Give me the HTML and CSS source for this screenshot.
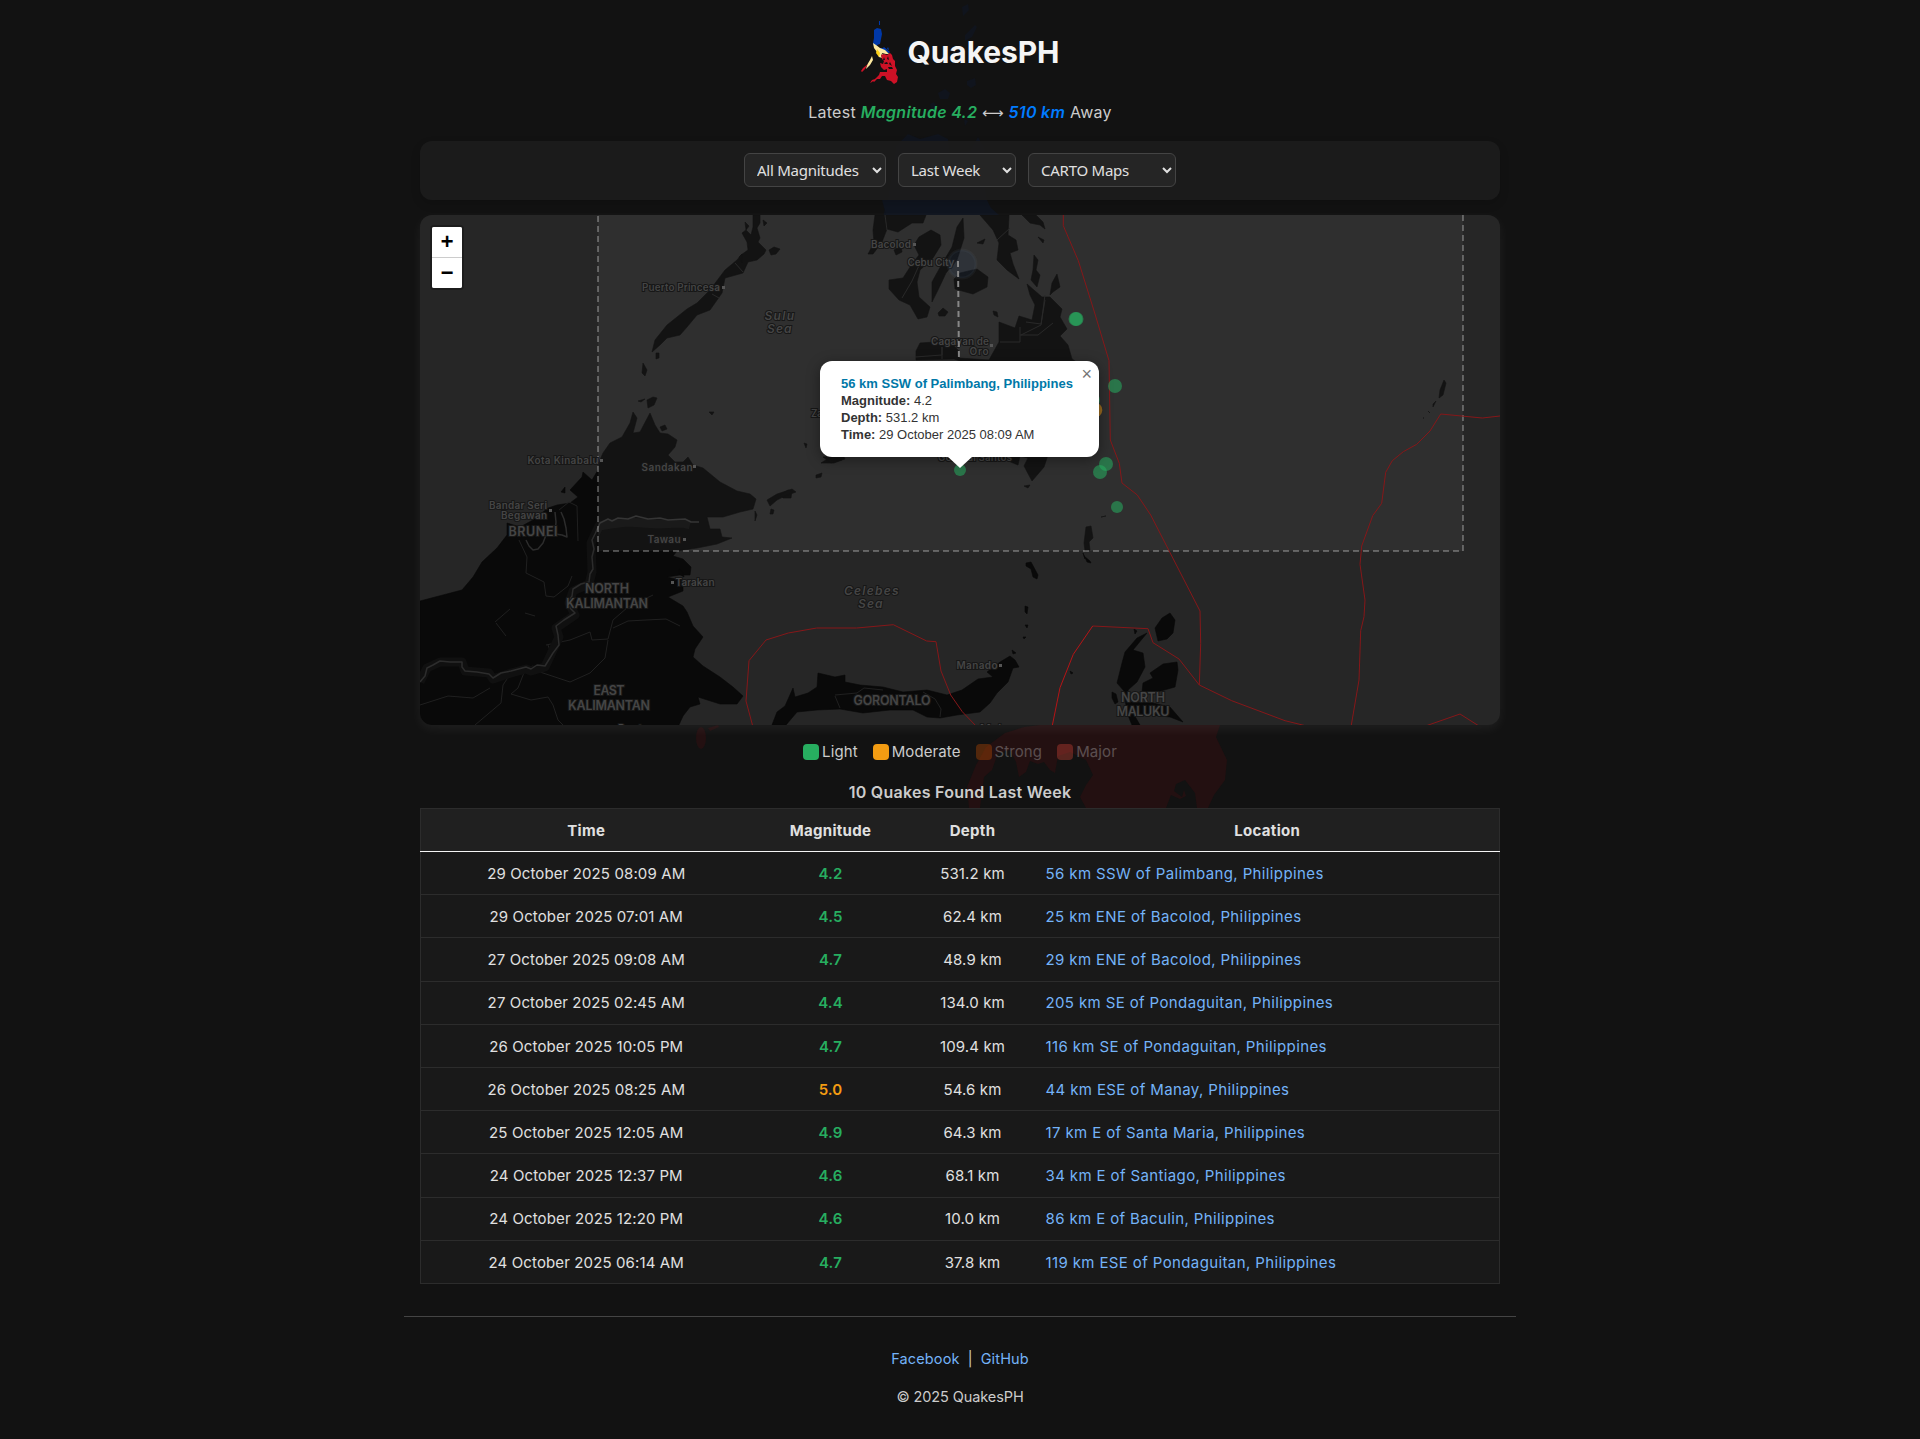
FILE: index.html
```html
<!DOCTYPE html>
<html lang="en">
<head>
<meta charset="utf-8">
<title>QuakesPH</title>
<link rel="stylesheet" href="styles.css">
</head>
<body>
<svg class="backdrop" viewBox="0 0 1920 1439" aria-hidden="true">
  <g fill="#10141d">
    <path d="M962 7l6-3 1 6-6 6zM965 35l10-10 2 2-5 10-7 4zM967 81l8-3 1 7-5 3-4-3zM938 93l7-4 5 4-2 6-8 0zM930 104l4-2 4 8-6 4zM964 119l4 2-3 5zM896 146l12-12 12 5 18-5 10 5 2 14 20-2 8-14 7 12-2 25 4 25-4 15 18 14H880l8-30z"/>
    <path fill="#10151f" d="M882 200h105l4 8 8 7H886z"/>
  </g>
  <g fill="#231011">
    <path d="M986 747L1005 733 1024 727 1040 725H1220L1216 737 1227 760 1225 780 1214 795 1208 808H1197L1195 793 1185 780 1176 784 1174 791 1182 797 1184 790 1186 796 1180 799 1171 795 1166 808H1086L1080 797 1086 785 1093 775 1086 760 1070 752 1058 756 1055 773 1050 770 1044 762 1038 764 1030 761 1026 772 1019 777 1016 762 1010 750 998 753 992 770 984 777 980 808H969L967 787 976 765z"/>
    <ellipse cx="701" cy="738" rx="5" ry="11"/>
    <path d="M708 728l10-3 1 2-9 4z"/>
  </g>
</svg>

<div class="page">
  <header class="header">
    <div class="brand">
      <svg class="logo" viewBox="0 0 38 64">
        <path fill="#0038a8" d="M13 10l3-2 4 1 1 5-1 5-1 5-3 1 1 3 5 0 1-1 6 5-1 1-5-1-5-3-5-3-1-3 1-5zM18 1h1v4h-1zM27 27l1 3-2-1z"/>
        <path fill="#fce9a0" d="M12 23l3 2 4 3 5 2 4 4-3 0-4-1-1 2 1 3-3-1-2-5-3-4zM11 36l1 4-3 5-4 4 1-4 3-5zM20 32l2 3-1 1z"/>
        <path fill="#fcd116" d="M16 29l3 4-1 4-3-4z"/>
        <path fill="#ce1126" d="M20 35l3-1 3 1 3-2 2 2 1 4 2 2 0 5 2 4-1 4 2 3-1 5-3 2-3-3-4-1-2-4-3 0-2 3-3 0-3 3-1-1 3-3 3-3 1-3 5 0 2 0 0-3-3 1-3-3-1-4 3 1 1-3-2-2zM7 44l-3 5-3 3-1-1 2-3zM14 59l-3 3-2 1 2-3z"/>
        <path fill="#121212" d="M23 37l1 3-2 0zM27 36l1 4-2-1zM23 43l3-1 1 2-3 0zM29 42l2 4-3-2zM27 47l4 0 1 2-4 0z"/>
      </svg>
      <h1 class="title">QuakesPH</h1>
    </div>
    <p class="latest">Latest <em class="mag">Magnitude 4.2</em> <span class="arrow">⟷</span> <em class="dist">510 km</em> Away</p>
  </header>

  <section class="controls">
    <select class="s1"><option>All Magnitudes</option></select>
    <select class="s2"><option>Last Week</option></select>
    <select class="s3"><option>CARTO Maps</option></select>
  </section>

  <section class="map">
    <svg class="tiles" viewBox="420 215 1080 510">
      <g class="land">
        <path d="M753 215l7 0 0 8-3 5 3 10-2 4 8 8-2 4-7 6-9 2-5 11-18 5-3 15-12 17-13 5-10 12-7 8-13 3-7 7-8 7 3-12 12-15 20-16 10-6 13-13 15-20 12-10 4-5 7-5-1-8-5-9 4-3 5 5 2-8z"/>
        <path d="M769 250l5-3 6 2-4 5-5 1zM656 353l3 0 0 5-3 1zM643 363l4 7-2 6-3-3zM647 400l6-3 4 1-3 7-6 3zM638 401l7-2-4 3zM709 412l5 0-2 3zM660 427l5-2 2 4-5 2zM745 222l4 4-3 4zM763 220l4 3-3 3zM742 263l-3-6 3-3z"/>
        <path d="M420 601l42-11 11-13 9-15 15-14 10-13 0-12 13 4 13-7 15-12 9-3 13-2 8-6-8-7 12-13 1-5 9 8 6-10 2-10 3-7 7-10 12-6 8-14 3-11 4 6-4 15 7-1 10-19 5 12 5 8 8 1 9 6-2 7-7 8 7 7 8 0 5-5 5 8 10 3 17 14 17 9 13 3 6 5-3 10-13 3-17 5-16 0 3 12 10 0 2 8 10 1-15 6-20 4-20 3-4 5 10 3 8 8-1 8-10 0-13 2 16 4 0 10-15 6 15 9 4 6 6 14 10 11-8 12-2 8 10 9 17 11 13 10 10 9-6 8-17 0-22-7 2 7-10 3-7 9-5 11-1 7H420z"/>
        <path d="M679 569l4 3 1 5-5-3zM561 492l4-5 0 6zM767 500l10-6 15-5 4 3-11 4-8 4-7 6zM771 509l3 1-1 4-3 0zM755 511l2 4-2 6zM804 443l3 1-1 4zM821 463l8-5 13 2-8 3zM816 475l6-2-1 4-5 1zM780 495l8-5 4 1-1 7-8 0zM823 457l20-2 2 4-14 4z"/>
        <path d="M875 215l-2 15 1 13-6 11 5 0 9-12 5-13 11 3 14-9 11 0 3-8zM894 250l7-4 1 6-6 3z"/>
        <path d="M919 237l12-7 9 5 1 10-8 13-13 12-3 12 2 15 11 10-3 10-9 2-8-14-11-5-10-11 0-9 14-2 9-14 7-9-5-10z"/>
        <path d="M963 218l1 20-7 22-11 13-8 17-6 12 0-20 11-20 9-15 5-20zM960 273l17-4 11 8-1 10-14 7-18-5-1-10zM938 313l5-5 5 4-3 4-6 0zM993 311l4 1 1 5-4-2zM977 243l8-4-2 5z"/>
        <path d="M980 215l13 15 6 13-2 17 10 10 12 9-6-15-3-11 8-3-2-10-8-5 1-20zM1022 215l8 8 10 2 5 4-2-7-7-7zM1034 255l4 5-2 10 4 5-3 12-6-7 2-10zM1052 283l5-9 3 13-7 5-3 3zM1038 237l6 3-1 3z"/>
        <path d="M1027 284l15 13 8 0 12 12-2 8 7 12-7 7 8 9 4 14 9 6v60l-30 20-4 13-3 9-12 14-8-15 4-8-8-2-2 9-17-7-15-9 0-80-32-10-38 1 0-9 4-8 29-2 10 10 0 7 30 2 10-18 0-20 16 6 4-12 13 4 3-15-5-10z"/>
        <path d="M1024 486l6-1-2 3zM1101 517l5-1zM1086 527l5-1 2 12-4 4 1 8-5 1-1-8zM1083 553l2 6-1-3 6 5 1 2-4-1zM1026 563l5-1 7 13-1 4-4-2-2-8-5-3zM1025 606l3 1-1 7-2-2zM1025 625l3 0-1 3zM1023 637l3 0-2 2zM1012 650l4 3-3 1zM1070 671l3 2-2 1z"/>
        <path d="M772 725l5-13 8-6 8-18 2 9 13-4 9-6 1-14 17 4 10-2 0 7 15 3 23 2 20 5 24-2 20 5 15-5 16-11 15-2-6-5 13-10 10-6 5 4 4 7-6 1-5 14-11 11-7 10-10 9-23 3-17 3-13-1-14-7-23 0-27 3-23-4-23 1-20 2-11 13z"/>
        <path d="M1147 633l-14 17 10 3 2 14-8 15-9 8 2 12 23 1 17 4 13 15-13-5-37-4 7 12h-8l-5-12-3-22-7-8 5-20 3-11 12-14zM1170 613l5 7-2 13-6 6-9 2-3-13 7-10zM1177 662l1 8-3 17-18 5-15 0 1-9 10-5-3-5 13-9zM1134 629l3 2-2 3zM1112 692l4 2 2 8-3 2-3-6z"/>
        <path d="M1440 390l4-10 2 3-3 12-4 3zM1433 404l3-3-3 6zM1428 411l2 2zM1423 418l1 0z"/>
      </g>
      <g class="border-minor">
        <path d="M885 215l2 15M902 298l10-17 9-20M997 240l13-12M1026 322l15 2 4-24M1020 335l18 0 15-12M1000 342h20v-15M1045 295l-4 30-20 10M915 357l27-2v-8M942 347v12M735 263l8 9M712 294l7 4"/>
        <path d="M519 540l8 17-1 16 18 9 2 14 8 1 14-11 4-10M578 541l-1-35-8-4-10 8M546 645l24-5 20-8 2 8 16-1 5-19 15-13 25-12M613 628l15-7 18-1 20-1 14 7M608 640l-3 18-15 15-20 9-30-10-7-6-13 5M513 670l-10 15-2 18-26 22M420 705l28-9 25 2 17-10M525 670l-7 18-7 6 20 6 17-3 5 8 5 15 15 15M495 622l15-13M496 623l10 13M525 613l10 3M548 645l4 11-5 7"/>
        <path d="M835 695l22-2 7-5 19 2M835 696l5 12M923 692l12 7 6 10-1 8"/>
      </g>
      <g class="border-major">
        <path class="glow" d="M420 682l7-14 13-6 22 0 3 9 24 2 4 6 18-6 15-4 5 2 14-4 14-30-3-9 19-13-6-12 4-12 16-7 3-12-1-29 8-17 12-2 16-2 30 2 25-1 8 2"/>
        <path d="M420 682l5-6 2-8 6-3 7-4 10 1 12 0 0 5 3 4 12 1 12 2 4 4 8-5 10-2 15-4 5 2 6-4 8 1 8-13 6-8-1-10-2-9 8-6 11-7-5-5-1-7 3-5 1-7 8-5 8-2 1-8 3-5-1-12 2-8-2-9 3-6 5-11 8-4 4 2 6-3 10 1 8-3 12 3 12-1 8 2 17-1 6 3 8 0"/>
        <path d="M526 540l3 6 4 4 5-1 5-6 3-8M555 512l1 10-1 12 7 1 5 2-1-9-2-9-3-7"/>
      </g>
      <rect class="zone" x="598" y="150" width="865" height="401"/>
      <g class="labels" text-anchor="middle">
        <g font-size="10"><text x="681" y="291" textLength="78">Puerto Princesa</text><text x="891" y="248" textLength="40">Bacolod</text><text x="931" y="266" textLength="47">Cebu City</text><text x="960" y="345" textLength="58">Cagayan de</text><text x="979" y="355" textLength="19">Oro</text><text x="563" y="464" textLength="71">Kota Kinabalu</text><text x="667" y="471" textLength="51">Sandakan</text><text x="518" y="509" textLength="58">Bandar Seri</text><text x="524" y="519" textLength="46">Begawan</text><text x="664" y="543" textLength="33">Tawau</text><text x="695" y="586" textLength="39">Tarakan</text><text x="977" y="669" textLength="41">Manado</text><text x="838" y="417" textLength="54">Zamboanga</text><text x="975" y="461" textLength="74">General Santos</text><text x="640" y="732" textLength="44">Bontang</text></g>
        <g font-size="12.5"><text x="533" y="536" textLength="49">BRUNEI</text><text x="607" y="593" textLength="44">NORTH</text><text x="607" y="608" textLength="82">KALIMANTAN</text><text x="609" y="695" textLength="31">EAST</text><text x="609" y="710" textLength="82">KALIMANTAN</text><text x="892" y="705" textLength="77">GORONTALO</text><text x="1143" y="702" textLength="44">NORTH</text><text x="1143" y="716" textLength="53">MALUKU</text></g>
        <g class="sea" font-size="12"><text x="780" y="320" textLength="31">Sulu</text><text x="780" y="333" textLength="26">Sea</text><text x="872" y="595" textLength="56">Celebes</text><text x="871" y="608" textLength="26">Sea</text><text x="1008" y="733" textLength="58">Moluccas</text></g>
      </g>
      <path class="towns" d="M722 286h3v3h-3zM913 243h3v3h-3zM990 344h3v3h-3zM600 459h3v3h-3zM693 465h3v3h-3zM549 509h3v3h-3zM683 538h3v3h-3zM671 581h3v3h-3zM999 664h3v3h-3z"/>
      <g class="faults">
        <path d="M1063.3 215V225.7L1078.3 260.7 1095 314 1109 360.7 1110.3 440 1119.3 463.3 1122 483 1137.3 495 1150.7 515 1200 611 1200.7 643.3 1199.3 685"/>
        <path d="M1092.7 626L1148 628.7 1153 642.7 1179 659 1199.3 685 1231.7 700.7 1285 720.7 1310.7 727"/>
        <path class="strong" d="M1052 727L1060 687.7 1073.3 654.3 1092.7 626"/>
        <path d="M1500 416L1482.3 418 1440.7 414 1430 431 1416.7 444.3 1403.3 451.7 1392.3 460.7 1385.7 472.3 1381.7 503.3 1372.7 515.7 1361.7 546 1360 564.3 1365 600 1364 616.7 1360.7 630.7 1359 680 1351 727M1427 725.5L1460 714 1479 726"/>
        <path d="M753 727L746 701 749 660.7 766 640 788.3 633 816.7 628H856.7L893.3 624.7 926.7 641 936 641.7 941 671 950.7 695 962.3 711.7 977 727"/>
      </g>
      <circle class="here" cx="962" cy="264" r="14"/>
      <path class="ray" d="M958 261L960 468"/>
      <g class="quakes">
        <circle cx="1075.5" cy="319" r="7"/><circle cx="1076.5" cy="319" r="7"/><circle cx="1115" cy="386" r="7"/><circle cx="1093" cy="400" r="7"/><circle class="moderate" cx="1095" cy="410" r="7.3"/>
        <circle cx="1106" cy="464" r="7"/><circle cx="1100" cy="472" r="7"/><circle cx="1117" cy="507" r="6"/><circle cx="960" cy="470" r="6"/>
      </g>
    </svg>
    <div class="zoom"><button>+</button><button>−</button></div>
    <div class="popup">
      <span class="close">×</span>
      <b class="place">56 km SSW of Palimbang, Philippines</b><br>
      <b>Magnitude:</b> 4.2<br>
      <b>Depth:</b> 531.2 km<br>
      <b>Time:</b> 29 October 2025 08:09 AM
    </div>
  </section>

  <div class="legend">
    <span class="key light">Light</span><span class="key moderate">Moderate</span><span class="key strong off">Strong</span><span class="key major off">Major</span>
  </div>
  <h2 class="count">10 Quakes Found Last Week</h2>

  <table class="quake-table">
    <colgroup><col class="c1"><col class="c2"><col class="c3"><col class="c4"></colgroup>
    <thead><tr><th>Time</th><th>Magnitude</th><th>Depth</th><th>Location</th></tr></thead>
    <tbody>
      <tr><td>29 October 2025 08:09 AM</td><td>4.2</td><td>531.2 km</td><td><a>56 km SSW of Palimbang, Philippines</a></td></tr>
      <tr><td>29 October 2025 07:01 AM</td><td>4.5</td><td>62.4 km</td><td><a>25 km ENE of Bacolod, Philippines</a></td></tr>
      <tr><td>27 October 2025 09:08 AM</td><td>4.7</td><td>48.9 km</td><td><a>29 km ENE of Bacolod, Philippines</a></td></tr>
      <tr><td>27 October 2025 02:45 AM</td><td>4.4</td><td>134.0 km</td><td><a>205 km SE of Pondaguitan, Philippines</a></td></tr>
      <tr><td>26 October 2025 10:05 PM</td><td>4.7</td><td>109.4 km</td><td><a>116 km SE of Pondaguitan, Philippines</a></td></tr>
      <tr><td>26 October 2025 08:25 AM</td><td class="mod">5.0</td><td>54.6 km</td><td><a>44 km ESE of Manay, Philippines</a></td></tr>
      <tr><td>25 October 2025 12:05 AM</td><td>4.9</td><td>64.3 km</td><td><a>17 km E of Santa Maria, Philippines</a></td></tr>
      <tr><td>24 October 2025 12:37 PM</td><td>4.6</td><td>68.1 km</td><td><a>34 km E of Santiago, Philippines</a></td></tr>
      <tr><td>24 October 2025 12:20 PM</td><td>4.6</td><td>10.0 km</td><td><a>86 km E of Baculin, Philippines</a></td></tr>
      <tr><td>24 October 2025 06:14 AM</td><td>4.7</td><td>37.8 km</td><td><a>119 km ESE of Pondaguitan, Philippines</a></td></tr>
    </tbody>
  </table>
</div>

<footer class="footer">
  <p><a>Facebook</a><span class="sep">|</span><a>GitHub</a></p>
  <p class="copy">© 2025 QuakesPH</p>
</footer>
</body>
</html>
```
FILE: styles.css
```css
* { box-sizing: border-box; }
html { background: #121212; }
body { margin: 0; color: #e0e0e0; font: 15px/1.5 Inter, "Noto Sans", sans-serif; height: 1439px; overflow: hidden; }
.backdrop { position: absolute; inset: 0; width: 1920px; height: 1439px; z-index: -1; }
.page { width: 1080px; margin: 0 auto; }
.header { height: 141px; padding-top: 20px; }
.brand { display: flex; justify-content: center; align-items: center; gap: 9px; height: 64px; }
.logo { width: 38px; height: 64px; }
.title { margin: 0; height: 64px; line-height: 64px; color: #f5f5f5; font-size: 30px; font-weight: 700; letter-spacing: -.1px; }
.latest { margin: 15px 0 0; text-align: center; font-size: 16px; line-height: 26px; color: #ccc; white-space: nowrap; letter-spacing: .28px; }
.latest em { font-weight: 600; }
.mag { color: #27ae60; }
.dist { color: #007bff; }
.arrow { font-family: "DejaVu Sans", sans-serif; font-size: 15px; }
.controls { display: flex; justify-content: center; align-items: center; gap: 12px; height: 59px; padding-bottom: 1px; background: rgba(28, 28, 28, .93); border-radius: 12px; box-shadow: 0 4px 10px rgba(0, 0, 0, .15); }
.controls select { height: 34px; padding: 0 4px 1px 8px; color: #e0e0e0; background: #252525; border: 1px solid #444; border-radius: 6px; font: 15px "Noto Sans", sans-serif; letter-spacing: -.25px; }
.s1 { width: 142px; }
.s2 { width: 118px; }
.s3 { width: 148px; }
.map { position: relative; margin-top: 15px; height: 510px; background: #262626; border-radius: 12px; box-shadow: 0 4px 12px rgba(255, 255, 255, .06); }
.tiles { display: block; width: 1080px; height: 510px; border-radius: 12px; overflow: hidden; }
.land { fill: #090909; stroke: #090909; stroke-width: .6; stroke-linejoin: round; }
.border-minor { fill: none; stroke: #202020; stroke-width: 1; }
.border-major { fill: none; stroke: #2c2c2c; stroke-width: 1.5; stroke-linejoin: round; }
.border-major .glow { stroke: #101010; stroke-width: 9; }
.zone { fill: rgba(255, 255, 255, .042); stroke: rgba(255, 255, 255, .27); stroke-width: 2; stroke-dasharray: 6 4; }
.labels { fill: #454545; font-family: Inter, "Open Sans", sans-serif; font-weight: 600; stroke: #171717; stroke-width: 2; paint-order: stroke; }
.sea { font-style: italic; letter-spacing: 1.5px; }
.towns { fill: #555; }
.faults { fill: none; stroke: #861719; stroke-width: 1; }
.faults .strong { stroke: #b51416; }
.here { fill: rgba(40, 70, 120, .12); stroke: rgba(120, 130, 140, .08); stroke-width: 3; }
.ray { stroke: #888; stroke-width: 2; stroke-dasharray: 6 4; }
.quakes circle { fill: #27ae60; fill-opacity: .55; }
.quakes .moderate { fill: #f39c12; }
.zoom { position: absolute; left: 12px; top: 12px; width: 30px; height: 61px; border-radius: 2px; background: #ccc; box-shadow: 0 0 0 2px rgba(0, 0, 0, .25); overflow: hidden; display: grid; gap: 1px; grid-template-rows: 30px 30px; }
.zoom button { border: 0; padding: 3px 0 0; background: #fff; color: #000; font: bold 22px/27px "Liberation Mono", monospace; }
.popup { position: absolute; left: 400px; top: 146px; width: 279px; height: 96px; padding: 15px 0 0 21px; border-radius: 12px; background: #fff; color: #333; font: 13px/16.9px "Liberation Sans", Arial, sans-serif; white-space: nowrap; box-shadow: 0 3px 14px rgba(0, 0, 0, .4); }
.popup::after { content: ""; position: absolute; left: 127px; top: 95px; border: 13px solid transparent; border-top: 12px solid #fff; border-bottom: 0; }
.place { color: #0078a8; }
.close { position: absolute; right: 7px; top: 5px; font-size: 18px; color: #757575; }
.legend { display: flex; justify-content: center; gap: 15px; margin-top: 16px; height: 22px; line-height: 22px; color: #ccc; font-size: 15px; }
.key { display: flex; align-items: center; gap: 3px; letter-spacing: .1px; }
.key::before { content: ""; width: 16px; height: 16px; border-radius: 4px; background: #27ae60; }
.key.moderate::before { background: #f39c12; }
.key.strong::before { background: #d35400; }
.key.major::before { background: #e74c3c; }
.off { opacity: .33; }
.count { margin: 18px 0 0; height: 27px; line-height: 22px; font-size: 16px; font-weight: 600; letter-spacing: .25px; text-align: center; color: #ccc; }
.quake-table { width: 1080px; table-layout: fixed; border-collapse: collapse; background: rgba(26, 26, 26, .96); border: 1px solid #2c2c2c; }
.c1 { width: 331px; }
.c2 { width: 158px; }
.c3 { width: 126px; }
.quake-table th { height: 43px; padding: 2px 0 0; background: #202020; font-size: 15px; font-weight: 700; letter-spacing: .3px; border-bottom: 1px solid #f5f5f5; }
.quake-table td { height: 43.2px; padding: 2px 0 0; text-align: center; letter-spacing: .12px; border-bottom: 1px solid #2c2c2c; }
.quake-table td:nth-child(2) { color: #27ae60; font-weight: 600; }
.quake-table td.mod:nth-child(2) { color: #f39c12; }
.quake-table td:last-child { text-align: left; padding-left: 10px; letter-spacing: .38px; }
a { color: #74b3f8; }
.footer { width: 1112px; margin: 32px auto 0; padding-top: 31px; border-top: 1px solid #444; text-align: center; font-size: 14.5px; color: #ccc; }
.footer p { margin: 0 0 16px; line-height: 22px; letter-spacing: .15px; }
.footer .copy { letter-spacing: -.1px; }
.sep { margin: 0 8px; }
```
